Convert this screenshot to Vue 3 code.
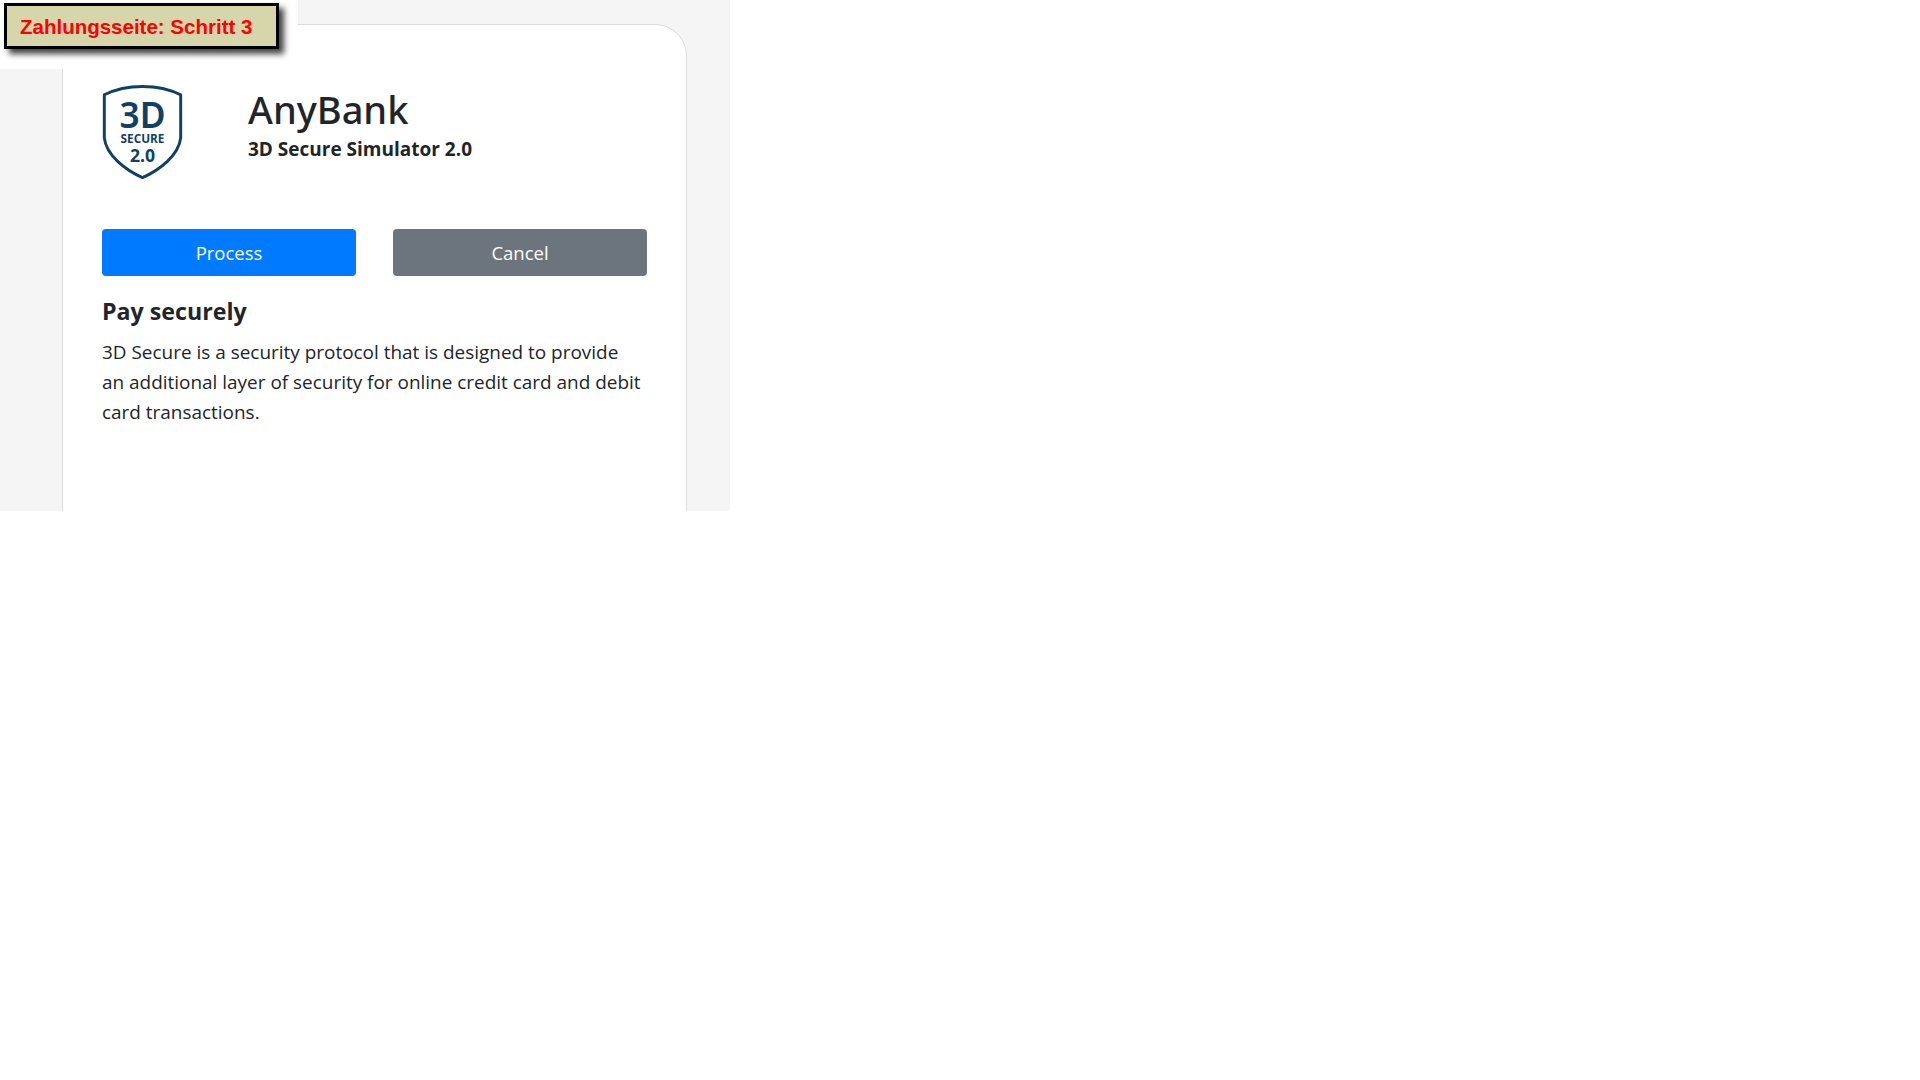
<script setup>
const title = 'AnyBank'
</script>

<template>
  <div class="page">
    <div class="card">
      <header class="head">
        <svg class="logo" viewBox="0 0 82 96" aria-hidden="true">
          <path class="shield" d="M2 10C14 4 27 1.500 41 1.500S68 4 80 10V54C78 72 58 87 41 94.500C24 87 4 72 2 54Z" />
          <text class="l3d" x="41" y="44" text-anchor="middle">3D</text>
          <text class="lsec" x="41" y="59.500" text-anchor="middle">SECURE</text>
          <text class="l20" x="41" y="78.500" text-anchor="middle">2.0</text>
        </svg>
        <div class="titles">
          <h1>{{ title }}</h1>
          <h2>3D Secure Simulator 2.0</h2>
        </div>
      </header>
      <div class="actions">
        <button class="btn blue">Process</button>
        <button class="btn grey">Cancel</button>
      </div>
      <h3>Pay securely</h3>
      <p>3D Secure is a security protocol that is designed to provide an additional layer of security for online credit card and debit card transactions.</p>
    </div>
    <div class="overlay">
      <div class="label">Zahlungsseite: Schritt 3</div>
    </div>
  </div>
</template>

<style scoped>
.page {
  position: relative;
  width: 730px;
  height: 511px;
  padding: 24px 0 0 62px;
  box-sizing: border-box;
  background: #f5f5f5;
  overflow: hidden;
  font-family: "Open Sans", "Noto Sans", sans-serif;
  color: #212529;
}
.card {
  width: 625px;
  height: 520px;
  box-sizing: border-box;
  padding: 60px 39px 0 39px;
  background: #fff;
  border: 1px solid #dcdcdc;
  border-radius: 32px;
}
.head {
  display: flex;
  align-items: flex-start;
  height: 102px;
}
.logo {
  width: 81px;
  height: 94px;
  flex: none;
}
.shield {
  fill: #fff;
  stroke: #0f4068;
  stroke-width: 3;
  stroke-linejoin: round;
}
.l3d {
  font: 600 36px "Noto Sans", sans-serif;
  fill: #0f4068;
}
.lsec {
  font: 700 12px "Open Sans", sans-serif;
  fill: #0f4068;
}
.l20 {
  font: 700 18px "Open Sans", sans-serif;
  fill: #0f4068;
}
.titles {
  margin-left: 65px;
}
h1 {
  margin: 0;
  font-family: "Noto Sans", "Open Sans", sans-serif;
  font-size: 38px;
  font-weight: 500;
  line-height: 48px;
}
h2 {
  margin: 4px 0 0;
  font-size: 19px;
  font-weight: 700;
  line-height: 24px;
}
.actions {
  display: flex;
  gap: 37px;
  margin-top: 42px;
}
.btn {
  width: 254px;
  height: 47px;
  border: 0;
  border-radius: 4px;
  color: #fff;
  font: 400 18.500px "Open Sans", sans-serif;
}
.blue {
  background: #007bff;
}
.grey {
  background: #6c757d;
}
h3 {
  margin: 20px 0 0;
  font-size: 23.200px;
  font-weight: 700;
  line-height: 30px;
}
p {
  margin: 11px 0 0;
  width: 543px;
  font-size: 18.950px;
  line-height: 30px;
}
.overlay {
  position: absolute;
  top: 0;
  left: 0;
  width: 298px;
  height: 69px;
  background: #fff;
}
.label {
  position: absolute;
  top: 3px;
  left: 4px;
  width: 275px;
  height: 46px;
  box-sizing: border-box;
  padding-left: 13px;
  border: 3px solid #000;
  background: #d6d6aa;
  box-shadow: 5px 5px 6px #444;
  color: #ff0000;
  font: 700 20.500px/42px "Liberation Sans", sans-serif;
  white-space: nowrap;
}
</style>
